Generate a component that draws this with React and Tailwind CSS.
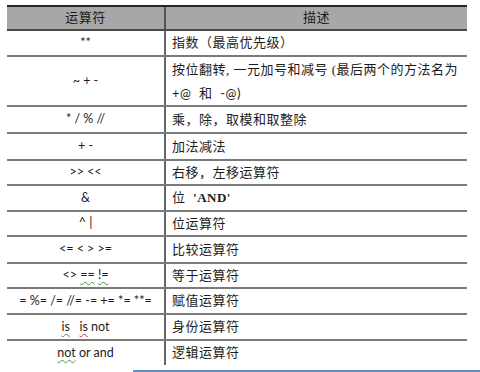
const rows = [
  { op: "**", desc: "指数（最高优先级）", h: "h-[26px]" },
  {
    op: "~ + -",
    desc: (
      <div className="flex flex-col">
        <span className="h-[25px] leading-[25px]">按位翻转, 一元加号和减号 (最后两个的方法名为</span>
        <span className="h-[23px] leading-[23px] font-['Lato','Noto_Sans_CJK_SC',sans-serif]">+@&nbsp;&nbsp;和&nbsp;&nbsp;-@)</span>
      </div>
    ),
    h: "h-[50px]",
  },
  { op: "* / % //", desc: "乘，除，取模和取整除", h: "h-[27px]" },
  { op: "+ -", desc: "加法减法", h: "h-[27px]" },
  { op: ">> <<", desc: "右移，左移运算符", h: "h-[25px]" },
  {
    op: "&",
    desc: (
      <span>
        位&nbsp;&nbsp;<span className="font-semibold">'AND'</span>
      </span>
    ),
    h: "h-[26px]",
  },
  { op: "^ |", desc: "位运算符", h: "h-[25px]" },
  { op: "<= < > >=", desc: "比较运算符", h: "h-[27px]" },
  {
    op: (
      <span>
        &lt;&gt; <span className="underline decoration-wavy decoration-[#3a9a3a] decoration-1 underline-offset-2">==</span>{" "}
        <span className="underline decoration-wavy decoration-[#3a9a3a] decoration-1 underline-offset-2">!=</span>
      </span>
    ),
    desc: "等于运算符",
    h: "h-[25px]",
  },
  { op: "= %= /= //= -= += *= **=", desc: "赋值运算符", h: "h-[26px]" },
  {
    op: (
      <span>
        <span className="underline decoration-wavy decoration-[#3a9a3a] decoration-1 underline-offset-2">is</span>
        &nbsp;&nbsp;&nbsp;
        <span className="underline decoration-wavy decoration-[#d03030] decoration-1 underline-offset-2">is</span> not
      </span>
    ),
    desc: "身份运算符",
    h: "h-[26px]",
  },
  {
    op: (
      <span>
        <span className="underline decoration-wavy decoration-[#3a9a3a] decoration-1 underline-offset-2">not</span> or and
      </span>
    ),
    desc: "逻辑运算符",
    h: "h-[24px]",
    last: true,
  },
];

export default function App() {
  return (
    <div className="w-[480px] h-[372px] bg-white overflow-hidden pt-[5px]">
      <div className="ml-[7px] w-[460px] text-[#1c1c1c]">
        {/* 表头 */}
        <div className="flex h-[26px] bg-[#a7a7a7] border-t-2 border-b-2 border-t-[#262626] border-b-[#4a4a4a] font-['Liberation_Serif','Noto_Sans_CJK_SC',serif] text-[13px] tracking-[0.5px]">
          <div className="w-[159px] flex items-center justify-center border-r-2 border-[#555]">运算符</div>
          <div className="flex-1 flex items-center justify-center">描述</div>
        </div>

        {rows.map((r, i) => (
          <div
            key={i}
            className={`flex ${r.h} ${r.last ? "" : "border-b-2 border-[#7a7a7a]"}`}
          >
            <div className="w-[159px] flex items-center justify-center border-r-2 border-[#666] font-['Lato','Liberation_Sans',sans-serif] text-[12.5px]">
              {r.op}
            </div>
            <div className="flex-1 flex items-center pl-[6px] font-['Liberation_Serif','Noto_Sans_CJK_SC',serif] text-[13px] tracking-[0.5px]">
              {r.desc}
            </div>
          </div>
        ))}
      </div>
      <div className="ml-[133px] mt-[5px] h-[2px] bg-[#5f93cc]" />
    </div>
  );
}
